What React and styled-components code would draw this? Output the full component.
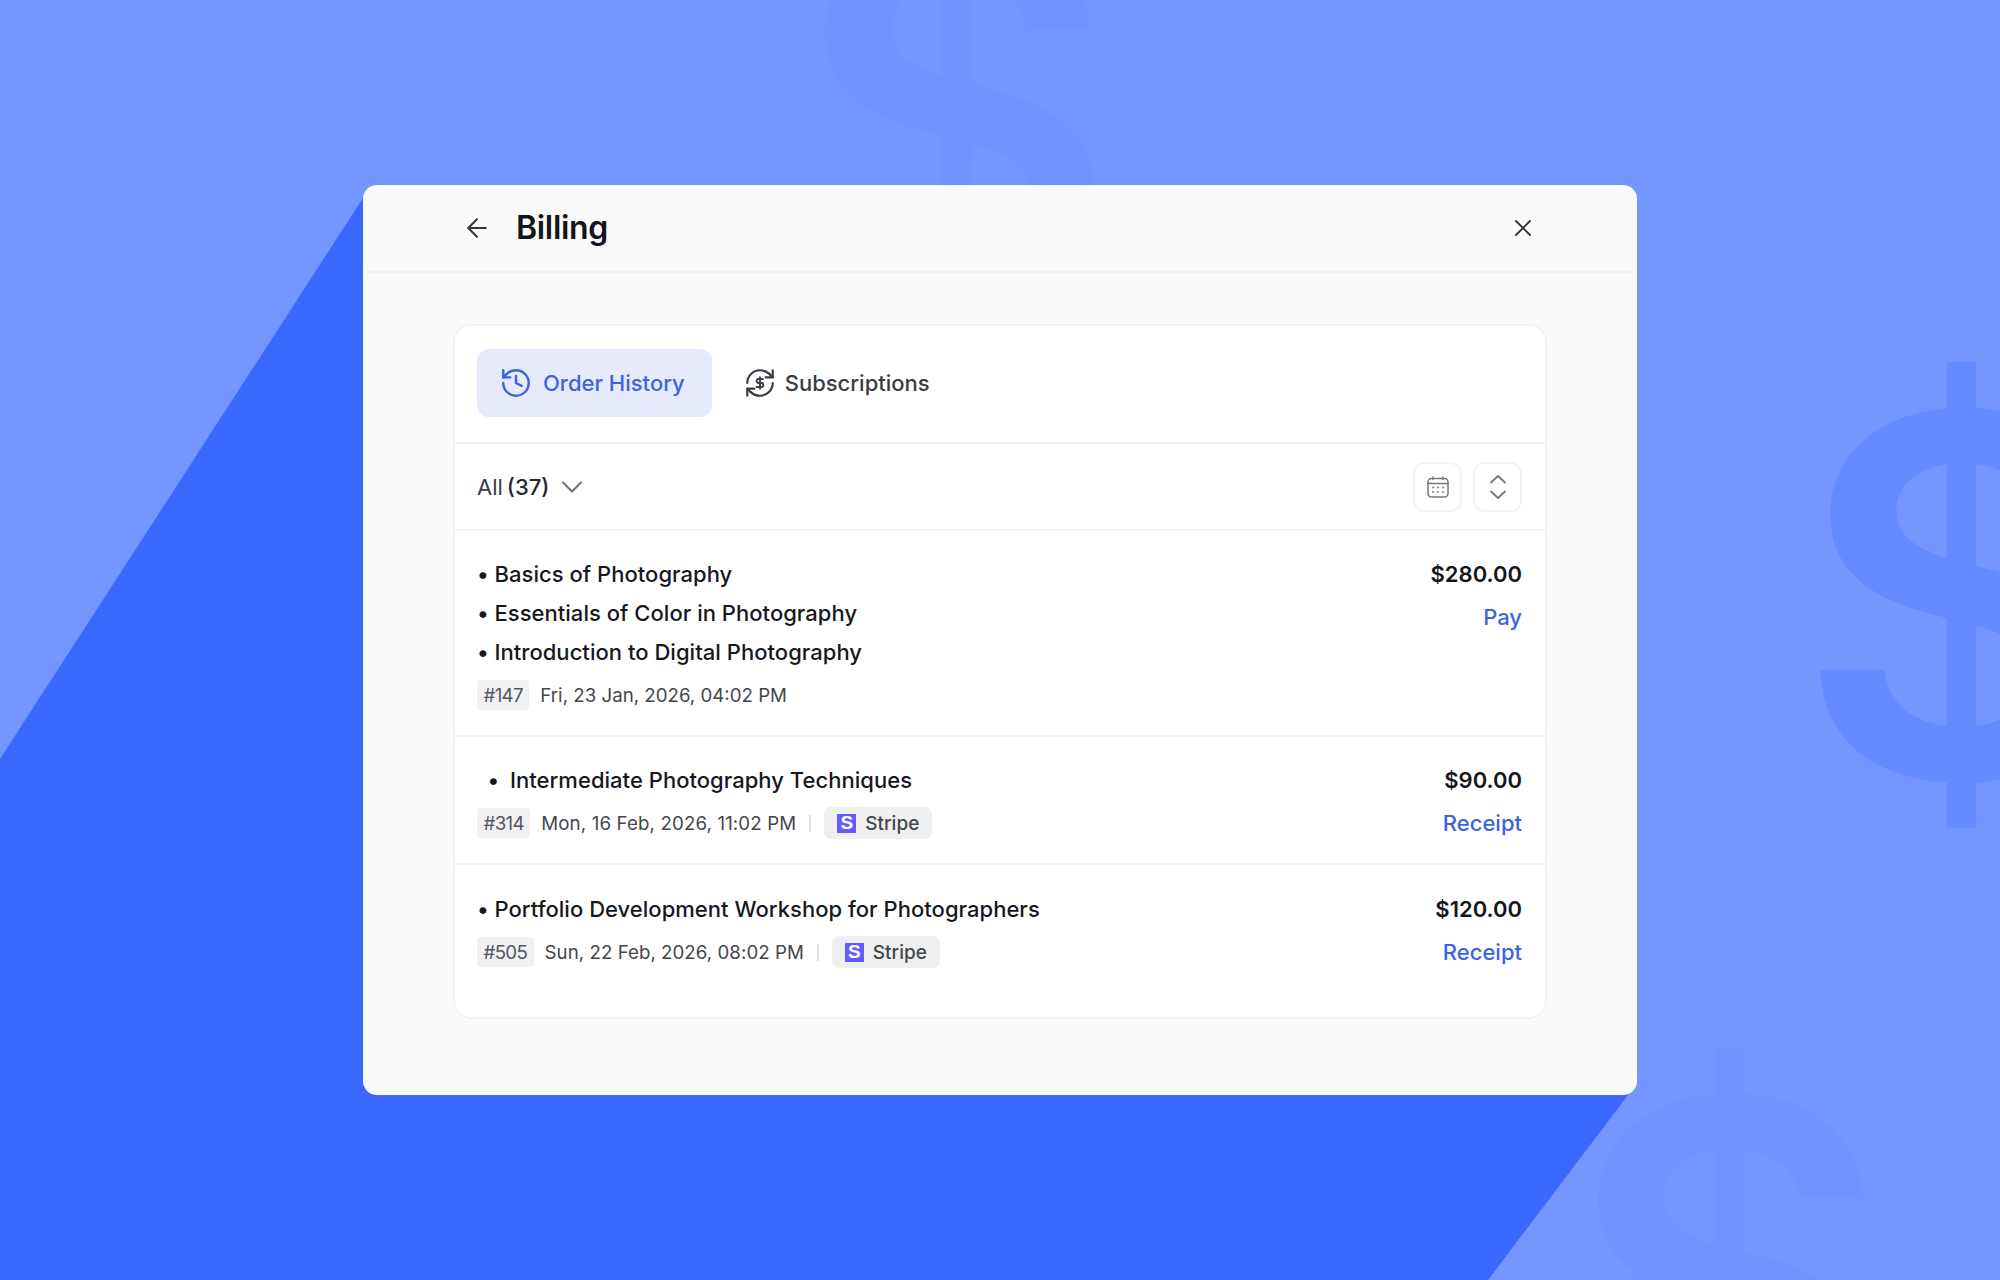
import React from 'react';
import styled, { createGlobalStyle } from 'styled-components';
import { ArrowLeft, X, History, ChevronDown } from 'lucide-react';

const Global = createGlobalStyle`
    html, body {
        margin: 0;
        padding: 0;
        overflow: hidden;
    }
    body {
        font-family: Inter, "Noto Sans", sans-serif;
        color: #14151a;
    }
`

const Stage = styled.div`
    position: relative;
    width: 2000px;
    height: 1280px;
    overflow: hidden;
    background: #7396ff;
    display: flex;
    align-items: center;
    justify-content: center;
`
const DarkShape = styled.div`
    position: absolute;
    inset: 0;
    background: #3a68ff;
    clip-path: polygon(0 759px, 363px 198px, 1000px 640px, 1628px 1095px, 1488px 1280px, 0 1280px);
`
const BigDollar = styled.span`
    position: absolute;
    left: ${p => p.$left}px;
    top: ${p => p.$top}px;
    font-size: 501px;
    line-height: 1;
    font-weight: 600;
    color: ${p => p.$color};
`

const Modal = styled.div`
    position: relative;
    width: 1274px;
    height: 910px;
    background: #fafafa;
    border-radius: 14px;
    display: flex;
    flex-direction: column;
`
const Header = styled.header`
    height: 86px;
    margin: 0 4px;
    padding: 0 96px 0 95px;
    border-bottom: 2px solid #f2f2f2;
    display: flex;
    align-items: center;
    color: #33343a;
`
const Title = styled.h1`
    margin: 0 0 0 24px;
    flex: 1;
    font-size: 32px;
    line-height: 40px;
    font-weight: 600;
    letter-spacing: -0.3px;
    color: #14151a;
`
const Body = styled.div`
    flex: 1;
    padding: 51px 90px 76px;
    display: flex;
`
const Card = styled.section`
    flex: 1;
    background: #fff;
    border: 2px solid #f3f3f3;
    border-radius: 18px;
    display: flex;
    flex-direction: column;
`
const Tabs = styled.div`
    height: 118px;
    padding: 0 22px 2px;
    box-sizing: border-box;
    border-bottom: 2px solid #f2f2f2;
    display: flex;
    align-items: center;
    gap: 31px;
`
const Tab = styled.div`
    height: 68px;
    padding: ${p => (p.$active ? '0 27px 0 22px' : '0')};
    border-radius: 12px;
    background: ${p => (p.$active ? '#e5ebfb' : 'transparent')};
    color: ${p => (p.$active ? '#3e63dd' : '#3b3c43')};
    font-size: 22px;
    font-weight: 450;
    display: flex;
    align-items: center;
    gap: ${p => (p.$active ? '10px' : '8px')};
`
const Filters = styled.div`
    height: 87px;
    padding: 0 23px 0 22px;
    box-sizing: border-box;
    border-bottom: 2px solid #f2f2f2;
    display: flex;
    align-items: center;
`
const FilterLabel = styled.div`
    flex: 1;
    display: flex;
    align-items: center;
    font-size: 22px;
    color: #3b3c43;
    svg {
        margin-left: 5px;
        color: #6f7076;
    }
    b {
        font-weight: 500;
        margin-left: 4px;
        color: #26272c;
    }
`
const IconButton = styled.div`
    width: 49px;
    height: 50px;
    box-sizing: border-box;
    margin-left: 11px;
    border: 2px solid #f3f3f3;
    border-radius: 11px;
    color: #76777c;
    display: flex;
    align-items: center;
    justify-content: center;
`
const Row = styled.div`
    flex: ${p => (p.$last ? 1 : 'none')};
    padding: ${p => (p.$last ? '24px' : '23px')} 23px 24px 22px;
    border-bottom: ${p => (p.$last ? 'none' : '2px solid #f2f2f2')};
    display: flex;
    justify-content: space-between;
`
const Courses = styled.div`
    display: flex;
    flex-direction: column;
`
const Course = styled.div`
    height: 39px;
    display: flex;
    align-items: center;
    font-size: 22px;
    font-weight: 450;
    letter-spacing: 0.03px;
    color: #17181d;
`
const Bullet = styled.span`
    width: ${p => (p.$wide ? '33px' : '17.5px')};
    text-align: ${p => (p.$wide ? 'center' : 'left')};
    flex: none;
`
const Meta = styled.div`
    height: 32px;
    margin-top: 8px;
    display: flex;
    align-items: center;
    font-size: 18.7px;
    color: #45464c;
`
const OrderTag = styled.span`
    height: 30px;
    padding: 0 6.5px;
    border-radius: 4px;
    background: #f0f1f3;
    color: #55565c;
    margin-right: 11px;
    display: flex;
    align-items: center;
    letter-spacing: -0.7px;
`
const OrderDate = styled.span`
    letter-spacing: ${p => p.$spacing || 0}px;
`
const Divider = styled.span`
    width: 2px;
    height: 17px;
    margin: 0 13px;
    background: #dedfe2;
`
const Chip = styled.span`
    height: 32px;
    padding: 0 13px;
    border-radius: 7px;
    background: #eeeff1;
    font-size: 19px;
    font-weight: 450;
    color: #45464c;
    display: flex;
    align-items: center;
    gap: 9px;
`
const StripeMark = styled.span`
    width: 19px;
    height: 19px;
    background: #635bff;
    color: #fff;
    font-family: "Liberation Sans", sans-serif;
    font-size: 19px;
    font-weight: 700;
    display: flex;
    align-items: center;
    justify-content: center;
`
const Side = styled.div`
    display: flex;
    flex-direction: column;
    align-items: flex-end;
`
const Price = styled.div`
    height: 39px;
    display: flex;
    align-items: center;
    font-size: 22px;
    font-weight: 600;
    color: #14151a;
`
const ActionLink = styled.a`
    height: 30px;
    margin-top: 9px;
    display: flex;
    align-items: center;
    font-size: 22px;
    font-weight: 450;
    color: #3e63dd;
`

const SubscriptionIcon = () => (
    <svg width="34" height="34" viewBox="0 0 24 24" fill="none" stroke="currentColor" strokeWidth="1.5" strokeLinecap="round" strokeLinejoin="round">
        <path d="M3 12a9 9 0 0 1 9-9 9.75 9.75 0 0 1 6.74 2.74L21 8" />
        <path d="M21 3v5h-5" />
        <path d="M21 12a9 9 0 0 1-9 9 9.75 9.75 0 0 1-6.74-2.74L3 16" />
        <path d="M8 16H3v5" />
        <g transform="translate(7.2 7.2) scale(0.4)" strokeWidth="3.4">
            <path d="M12 2v20" />
            <path d="M17 5H9.5a3.5 3.5 0 0 0 0 7h5a3.5 3.5 0 0 1 0 7H6" />
        </g>
    </svg>
);

const CalendarIcon = () => (
    <svg width="24" height="24" viewBox="0 0 24 24" fill="none" stroke="currentColor" strokeWidth="1.5" strokeLinecap="round">
        <rect x="2" y="3.5" width="20" height="18.5" rx="3.5" />
        <path d="M2 8.5h20M7 2v2.5M17 2v2.5" />
        <g fill="currentColor" stroke="none">
            {[7, 12, 17].map(x => [12.5, 17].map(y => <circle key={x + '-' + y} cx={x} cy={y} r="1" />))}
        </g>
    </svg>
);

const SortIcon = () => (
    <svg width="18" height="26" viewBox="0 0 18 26" fill="none" stroke="currentColor" strokeWidth="1.8" strokeLinecap="round" strokeLinejoin="round">
        <path d="M2 8.5 9 2l7 6.5" />
        <path d="M2 17.5 9 24l7-6.5" />
    </svg>
);

const orders = [
    {
        id: '#147',
        date: 'Fri, 23 Jan, 2026, 04:02 PM',
        price: '$280.00',
        action: 'Pay',
        courses: ['Basics of Photography', 'Essentials of Color in Photography', 'Introduction to Digital Photography'],
    },
    {
        id: '#314',
        date: 'Mon, 16 Feb, 2026, 11:02 PM',
        spacing: 0.13,
        price: '$90.00',
        action: 'Receipt',
        stripe: true,
        wide: true,
        courses: ['Intermediate Photography Techniques'],
    },
    {
        id: '#505',
        date: 'Sun, 22 Feb, 2026, 08:02 PM',
        spacing: 0.04,
        price: '$120.00',
        action: 'Receipt',
        stripe: true,
        courses: ['Portfolio Development Workshop for Photographers'],
    },
];

const App = () => (
    <Stage>
        <Global />
        <DarkShape />
        <BigDollar $left={1797} $top={345} $color="#648bff">$</BigDollar>
        <BigDollar $left={792} $top={-137} $color="#6f93ff">$</BigDollar>
        <BigDollar $left={1565} $top={1031} $color="#6f93ff">$</BigDollar>
        <Modal>
            <Header>
                <ArrowLeft size={30} strokeWidth={1.5} />
                <Title>Billing</Title>
                <X size={28} strokeWidth={1.6} />
            </Header>
            <Body>
                <Card>
                    <Tabs>
                        <Tab $active>
                            <History size={34} strokeWidth={1.7} />
                            Order History
                        </Tab>
                        <Tab>
                            <SubscriptionIcon />
                            Subscriptions
                        </Tab>
                    </Tabs>
                    <Filters>
                        <FilterLabel>
                            All <b>(37)</b>
                            <ChevronDown size={36} strokeWidth={1.4} />
                        </FilterLabel>
                        <IconButton><CalendarIcon /></IconButton>
                        <IconButton><SortIcon /></IconButton>
                    </Filters>
                    {orders.map((order, i) => (
                        <Row key={order.id} $last={i === orders.length - 1}>
                            <Courses>
                                {order.courses.map(course => (
                                    <Course key={course}>
                                        <Bullet $wide={order.wide}>•</Bullet>
                                        {course}
                                    </Course>
                                ))}
                                <Meta>
                                    <OrderTag>{order.id}</OrderTag>
                                    <OrderDate $spacing={order.spacing}>{order.date}</OrderDate>
                                    {order.stripe && (
                                        <>
                                            <Divider />
                                            <Chip><StripeMark>S</StripeMark>Stripe</Chip>
                                        </>
                                    )}
                                </Meta>
                            </Courses>
                            <Side>
                                <Price>{order.price}</Price>
                                <ActionLink>{order.action}</ActionLink>
                            </Side>
                        </Row>
                    ))}
                </Card>
            </Body>
        </Modal>
    </Stage>
);

export default App;
